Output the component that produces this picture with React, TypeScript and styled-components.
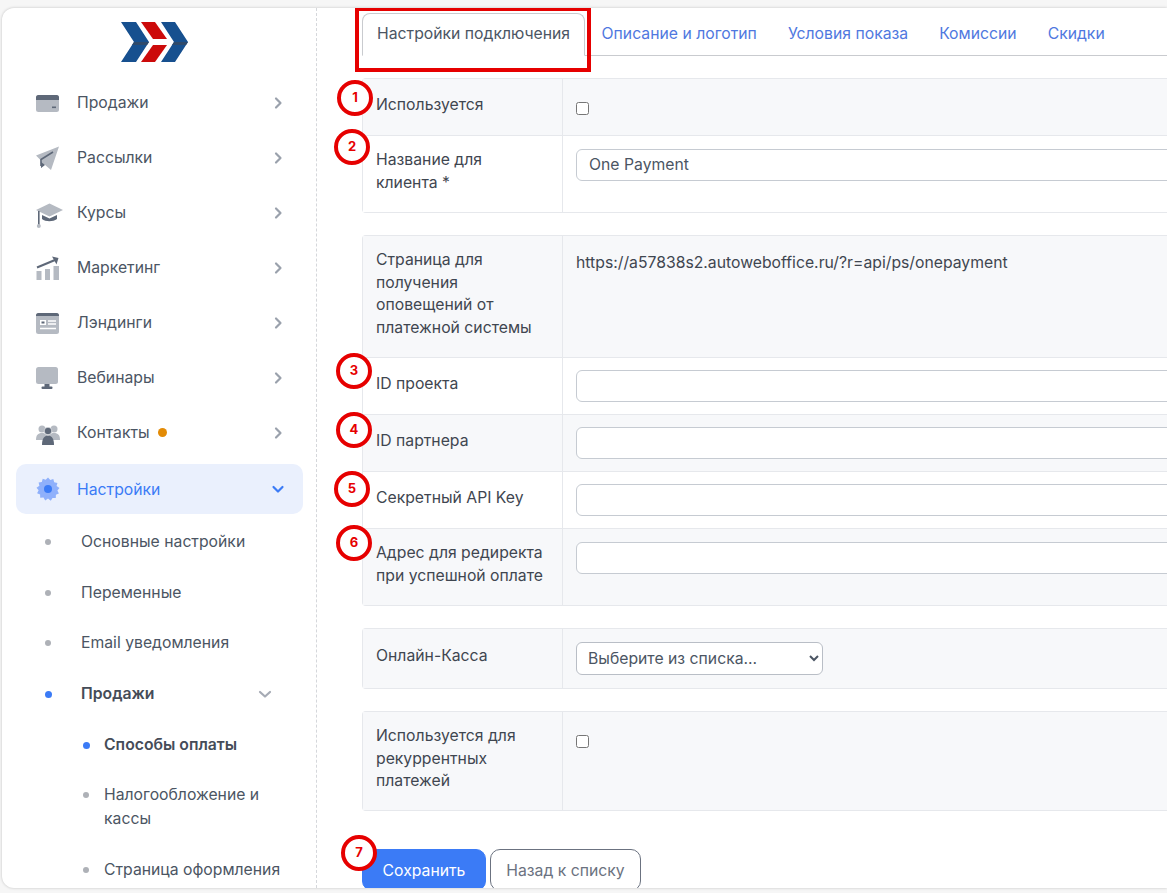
import React from "react";

import styled, { createGlobalStyle } from "styled-components";

const BLUE = "#3b7bf6";
const GREY_ICON = "#b5bac2";
const DARK_ICON = "#5e6878";
const TEXT = "#4b5563";
const LABEL = "#3f4650";
const LINE = "#e6e8ec";
const ALT_ROW = "#f7f8fa";
const RED = "#e60000";
const FONT_SIZE = "15.75px";

const GlobalStyle = createGlobalStyle`
  html, body {
    margin: 0;
    height: 100%;
    overflow: hidden;
    background: #f6f6f6;
  }
  body, input, select, button {
    font-family: Inter, "Liberation Sans", sans-serif;
  }
`;

const Card = styled.div`
  display: flex;
  height: 880px;
  margin: 8px 0 0 2px;
  background: #fff;
  border-radius: 12px 0 0 12px;
  box-shadow: 0 0 3px rgba(0, 0, 0, 0.22);
  overflow: hidden;
`;

const Sidebar = styled.aside`
  flex: none;
  width: 315px;
  box-sizing: border-box;
  padding: 14px 13px 0 14px;
  border-right: 1px dashed #d5d7db;
  overflow: hidden;
`;

const LogoRow = styled.div`
  display: flex;
  height: 40px;
  margin-bottom: 13px;
  padding-left: 105px;
`;

const Menu = styled.nav`
  display: flex;
  flex-direction: column;
`;

const MenuItem = styled.div<{ $active?: boolean }>`
  display: flex;
  align-items: center;
  height: ${(p) => (p.$active ? "50px" : "55px")};
  margin: ${(p) => (p.$active ? "4px 0 1px" : "0")};
  padding: 0 20px;
  border-radius: 10px;
  background: ${(p) => (p.$active ? "#eaf0fd" : "transparent")};
  color: ${(p) => (p.$active ? BLUE : TEXT)};
  font-size: ${FONT_SIZE};
`;

const MenuIcon = styled.svg`
  flex: none;
  width: 24px;
  height: 24px;
  margin-right: 17px;
  overflow: visible;
`;

const MenuLabel = styled.span`
  flex: 1;
  display: flex;
  align-items: center;
  gap: 8px;
`;

const OrangeDot = styled.span`
  width: 9px;
  height: 9px;
  border-radius: 50%;
  background: #e38b06;
`;

const Chevron = styled.svg<{ $color?: string }>`
  flex: none;
  align-self: center;
  width: 14px;
  height: 14px;
  margin-right: -2px;
  fill: none;
  stroke: ${(p) => p.$color ?? "#9aa1ac"};
  stroke-width: 2.2;
  stroke-linecap: round;
  stroke-linejoin: round;
`;

const SubMenu = styled.div`
  display: flex;
  flex-direction: column;
  padding-top: 2px;
`;

const SubItem = styled.div<{ $active?: boolean; $nested?: boolean }>`
  display: flex;
  align-items: flex-start;
  padding: ${(p) => (p.$nested ? "13.3px 20px 13.3px 67px" : "13.3px 33px 13.3px 29px")};
  color: ${(p) => (p.$active ? "#454c58" : TEXT)};
  font-size: ${FONT_SIZE};
  font-weight: ${(p) => (p.$active ? 600 : 400)};
  line-height: 24px;
`;

const SubDot = styled.span<{ $active?: boolean; $nested?: boolean }>`
  flex: none;
  width: ${(p) => (p.$active ? "7px" : "6px")};
  height: ${(p) => (p.$active ? "7px" : "6px")};
  margin-top: 9px;
  margin-right: ${(p) => {
    const gap = p.$nested ? 15 : 30;
    return p.$active ? gap - 1 : gap;
  }}px;
  border-radius: 50%;
  background: ${(p) => (p.$active ? BLUE : "#aeb1b7")};
`;

const SubText = styled.span`
  flex: 1;
`;

const Main = styled.main`
  flex: 1;
  min-width: 0;
  padding: 5px 0 0 45px;
  overflow: hidden;
`;

const Tabs = styled.div`
  position: relative;
  display: flex;
  height: 42px;
  border-bottom: 1px solid #c9cbcf;
  margin-bottom: 22px;
`;

const TabHighlight = styled.div`
  position: absolute;
  left: -7px;
  top: -6px;
  width: 236px;
  height: 65px;
  box-sizing: border-box;
  border: 4px solid ${RED};
  pointer-events: none;
`;

const Tab = styled.a<{ $active?: boolean }>`
  box-sizing: border-box;
  height: 43px;
  padding: ${(p) => (p.$active ? "10px 13.5px 0 14px" : "10px 14px 0 16px")};
  margin-right: ${(p) => (p.$active ? "0" : "-1px")};
  border: 1px solid ${(p) => (p.$active ? "#c9cbcf" : "transparent")};
  border-bottom-color: ${(p) => (p.$active ? "#fff" : "transparent")};
  border-radius: 8px 8px 0 0;
  background: ${(p) => (p.$active ? "#fff" : "transparent")};
  color: ${(p) => (p.$active ? TEXT : "#4f78e0")};
  font-size: ${FONT_SIZE};
  line-height: 20px;
  white-space: nowrap;
`;

const Group = styled.section`
  margin-bottom: 22px;
  border: 1px solid ${LINE};
  border-right: 0;
  border-radius: 4px 0 0 4px;
  width: 900px;
`;

const Row = styled.div<{ $alt?: boolean; $height: number }>`
  position: relative;
  display: flex;
  box-sizing: border-box;
  height: ${(p) => p.$height}px;
  background: ${(p) => (p.$alt ? ALT_ROW : "#fff")};
  & + & {
    border-top: 1px solid ${LINE};
  }
`;

const Label = styled.div<{ $pad?: number }>`
  flex: none;
  width: 200px;
  box-sizing: border-box;
  padding: ${(p) => p.$pad ?? 13}px 18px 0 13px;
  border-right: 1px solid ${LINE};
  color: ${LABEL};
  font-size: ${FONT_SIZE};
  line-height: 22.5px;
`;

const Value = styled.div<{ $pad?: number }>`
  flex: 1;
  padding: ${(p) => p.$pad ?? 13}px 13px 0;
  color: ${LABEL};
  font-size: ${FONT_SIZE};
  line-height: 22.5px;
`;

const TextInput = styled.input`
  display: block;
  box-sizing: border-box;
  width: 800px;
  height: 32px;
  padding: 0 12px 2px;
  border: 1px solid #c6cbd2;
  border-radius: 6px;
  background: #fff;
  color: ${TEXT};
  font-size: ${FONT_SIZE};
  outline: none;
`;

const Check = styled.input.attrs({ type: "checkbox" })`
  display: block;
  width: 13px;
  height: 13px;
  margin: 10px 0 0;
`;

const SelectBox = styled.select`
  display: block;
  box-sizing: border-box;
  width: 247px;
  height: 33px;
  padding: 0 7px;
  border: 1px solid #b9bec6;
  border-radius: 6px;
  background: #fff;
  color: ${TEXT};
  font-size: ${FONT_SIZE};
`;

const Actions = styled.div`
  position: relative;
  display: flex;
  gap: 4px;
  padding-top: 16px;
`;

const SaveButton = styled.button`
  box-sizing: border-box;
  width: 124px;
  height: 42px;
  border: 1px solid ${BLUE};
  border-radius: 10px;
  background: ${BLUE};
  color: #fff;
  font-size: ${FONT_SIZE};
`;

const BackButton = styled.button`
  box-sizing: border-box;
  width: 151px;
  height: 42px;
  border: 1px solid #6b7280;
  border-radius: 10px;
  background: #fff;
  color: #6b7280;
  font-size: ${FONT_SIZE};
`;

const Marker = styled.span<{ $left: number; $top: number }>`
  position: absolute;
  left: ${(p) => p.$left}px;
  top: ${(p) => p.$top}px;
  z-index: 2;
  display: flex;
  align-items: center;
  justify-content: center;
  box-sizing: border-box;
  width: 36px;
  height: 36px;
  padding-bottom: 3px;
  border: 4.5px solid ${RED};
  border-radius: 50%;
  background: #fff;
  color: ${RED};
  font-size: 13px;
  font-weight: 700;
`;

const LogoMark = () => (
  <svg width="67" height="40" viewBox="0 0 67 40">
    <path d="M0 0h15l13 20-13 20H0l13-20z" fill="#17508f" />
    <path d="M20 0h14l12 17H32z" fill="#cc0a0a" />
    <path d="M32 23h14L34 40H20z" fill="#cc0a0a" />
    <path d="M40 0h14l13 20-13 20H40l13-20z" fill="#17508f" />
    <path d="M13 20h15l-2 3H11zM53 20h14l-2 3H51z" fill="#2f4a6b" />
  </svg>
);

const icons: Record<string, React.ReactNode> = {
  sales: (
    <>
      <rect x="0" y="4" width="23" height="17" rx="2.5" fill={GREY_ICON} />
      <path d="M0 9V6.500A2.500 2.500 0 0 1 2.500 4h18a2.500 2.500 0 0 1 2.500 2.500V9z" fill={DARK_ICON} />
      <rect x="16" y="15.500" width="4" height="1.600" fill={DARK_ICON} />
    </>
  ),
  mail: (
    <>
      <path d="M0 9.500 23 0.500 15 24 8.500 18.500 5 22 4.500 14z" fill={GREY_ICON} />
      <path d="M17 6 5 13.500V20" fill="none" stroke={DARK_ICON} strokeWidth="1.600" />
      <path d="M5 16 9 19 5 22z" fill={DARK_ICON} />
    </>
  ),
  courses: (
    <>
      <path d="M13.500 2.500 27 9 13.500 15.500 0 9z" fill={GREY_ICON} />
      <path d="M6 14v4c3.500 3 11 3 15 0v-4l-7.500 3.500z" fill={DARK_ICON} />
      <rect x="2" y="10" width="1.600" height="14" fill={DARK_ICON} />
      <circle cx="2.800" cy="25" r="2" fill={GREY_ICON} />
    </>
  ),
  marketing: (
    <>
      <rect x="0.500" y="15" width="5" height="9" fill={GREY_ICON} />
      <rect x="9" y="13" width="5" height="11" fill={GREY_ICON} />
      <rect x="17.500" y="10" width="5.500" height="14" fill={GREY_ICON} />
      <path d="M1 11.500 19 4" stroke={DARK_ICON} strokeWidth="2" />
      <path d="M16 0.500 22.500 2 20.500 8.500z" fill={DARK_ICON} />
    </>
  ),
  landing: (
    <>
      <rect x="0" y="2" width="23" height="21" rx="2.500" fill={GREY_ICON} />
      <path d="M0 5V4.500A2.500 2.500 0 0 1 2.500 2h18a2.500 2.500 0 0 1 2.500 2.500V5z" fill={DARK_ICON} />
      <rect x="4" y="9" width="6" height="5" fill="#fff" />
      <rect x="5.500" y="10.500" width="3" height="2" fill={DARK_ICON} />
      <path d="M12 10h8M12 13h8M4 17.500h16" stroke="#fff" strokeWidth="1.300" />
    </>
  ),
  webinar: (
    <>
      <rect x="0" y="1" width="22" height="17" rx="2.500" fill={GREY_ICON} />
      <rect x="8.500" y="18" width="5" height="3" fill={DARK_ICON} />
      <rect x="5.500" y="20.500" width="11" height="2.500" rx="1" fill={DARK_ICON} />
    </>
  ),
  contacts: (
    <>
      <circle cx="6" cy="8" r="3.500" fill={GREY_ICON} />
      <circle cx="18" cy="8" r="3.500" fill={GREY_ICON} />
      <path d="M0 19c0-5 2-7 6-7s6 2 6 7zM12 19c0-5 2-7 6-7s6 2 6 7z" fill={GREY_ICON} />
      <circle cx="12" cy="10" r="3.800" fill={DARK_ICON} stroke="#fff" strokeWidth="0.600" />
      <path d="M6 24c0-6 2-9.500 6-9.500s6 3.500 6 9.500z" fill={DARK_ICON} />
    </>
  ),
  settings: (
    <>
      <path
        d="M12 0.500l2.300 2.500 3-1 .9 3.200 3.200.7-.8 3.200 2.900 1.900-2.100 2.500 1.500 3-3 1.300-.1 3.300-3.300-.2-1.700 2.800L12 21.500l-2.800 1.900-1.700-2.800-3.300.2-.1-3.300-3-1.300 1.500-3L.5 10.700l2.900-1.900-.8-3.200 3.200-.7.900-3.200 3 1z"
        fill="#8fb0fb"
      />
      <circle cx="12" cy="12" r="4" fill={BLUE} />
    </>
  ),
};

const mainItems = [
  { key: "sales", title: "Продажи" },
  { key: "mail", title: "Рассылки" },
  { key: "courses", title: "Курсы" },
  { key: "marketing", title: "Маркетинг" },
  { key: "landing", title: "Лэндинги" },
  { key: "webinar", title: "Вебинары" },
  { key: "contacts", title: "Контакты", dot: true },
];

const App: React.FC = () => (
  <>
    <GlobalStyle />
    <Card>
      <Sidebar>
        <LogoRow>
          <LogoMark />
        </LogoRow>
        <Menu>
          {mainItems.map((item) => (
            <MenuItem key={item.key}>
              <MenuIcon viewBox="0 0 24 24">{icons[item.key]}</MenuIcon>
              <MenuLabel>
                {item.title}
                {item.dot && <OrangeDot />}
              </MenuLabel>
              <Chevron viewBox="0 0 14 14">
                <path d="M5 2.500 9.500 7 5 11.500" />
              </Chevron>
            </MenuItem>
          ))}
          <MenuItem $active>
            <MenuIcon viewBox="0 0 24 24">{icons.settings}</MenuIcon>
            <MenuLabel>Настройки</MenuLabel>
            <Chevron viewBox="0 0 14 14" $color={BLUE}>
              <path d="M2.500 5 7 9.500 11.500 5" />
            </Chevron>
          </MenuItem>
          <SubMenu>
            <SubItem>
              <SubDot />
              <SubText>Основные настройки</SubText>
            </SubItem>
            <SubItem>
              <SubDot />
              <SubText>Переменные</SubText>
            </SubItem>
            <SubItem>
              <SubDot />
              <SubText>Email уведомления</SubText>
            </SubItem>
            <SubItem $active>
              <SubDot $active />
              <SubText>Продажи</SubText>
              <Chevron viewBox="0 0 14 14" $color="#a6abb5">
                <path d="M2 5 7 9.500 12 5" />
              </Chevron>
            </SubItem>
            <SubItem $active $nested>
              <SubDot $active $nested />
              <SubText>Способы оплаты</SubText>
            </SubItem>
            <SubItem $nested>
              <SubDot $nested />
              <SubText>Налогообложение и кассы</SubText>
            </SubItem>
            <SubItem $nested>
              <SubDot $nested />
              <SubText>Страница оформления</SubText>
            </SubItem>
          </SubMenu>
        </Menu>
      </Sidebar>
      <Main>
        <Tabs>
          <TabHighlight />
          <Tab $active>Настройки подключения</Tab>
          <Tab>Описание и логотип</Tab>
          <Tab>Условия показа</Tab>
          <Tab>Комиссии</Tab>
          <Tab>Скидки</Tab>
        </Tabs>

        <Group>
          <Row $alt $height={56}>
            <Marker $left={-26} $top={1}>1</Marker>
            <Label $pad={15}>Используется</Label>
            <Value>
              <Check />
            </Value>
          </Row>
          <Row $height={77}>
            <Marker $left={-29} $top={-7}>2</Marker>
            <Label>Название для клиента *</Label>
            <Value>
              <TextInput defaultValue="One Payment" />
            </Value>
          </Row>
        </Group>

        <Group>
          <Row $alt $height={121}>
            <Label>Страница для получения оповещений от платежной системы</Label>
            <Value $pad={16}>https://a57838s2.autoweboffice.ru/?r=api/ps/onepayment</Value>
          </Row>
          <Row $height={57}>
            <Marker $left={-27} $top={-5}>3</Marker>
            <Label $pad={15}>ID проекта</Label>
            <Value $pad={12}>
              <TextInput />
            </Value>
          </Row>
          <Row $alt $height={57}>
            <Marker $left={-27} $top={-3}>4</Marker>
            <Label $pad={15}>ID партнера</Label>
            <Value $pad={12}>
              <TextInput />
            </Value>
          </Row>
          <Row $height={57}>
            <Marker $left={-29} $top={-1}>5</Marker>
            <Label $pad={15}>Секретный API Key</Label>
            <Value $pad={12}>
              <TextInput />
            </Value>
          </Row>
          <Row $alt $height={77}>
            <Marker $left={-27} $top={-4}>6</Marker>
            <Label>Адрес для редиректа при успешной оплате</Label>
            <Value>
              <TextInput />
            </Value>
          </Row>
        </Group>

        <Group>
          <Row $alt $height={59}>
            <Label $pad={16}>Онлайн-Касса</Label>
            <Value>
              <SelectBox defaultValue="">
                <option value="">Выберите из списка...</option>
              </SelectBox>
            </Value>
          </Row>
        </Group>

        <Group>
          <Row $alt $height={98}>
            <Label>Используется для рекуррентных платежей</Label>
            <Value>
              <Check />
            </Value>
          </Row>
        </Group>

        <Actions>
          <Marker $left={-21} $top={2}>7</Marker>
          <SaveButton>Сохранить</SaveButton>
          <BackButton>Назад к списку</BackButton>
        </Actions>
      </Main>
    </Card>
  </>
);

export default App;
